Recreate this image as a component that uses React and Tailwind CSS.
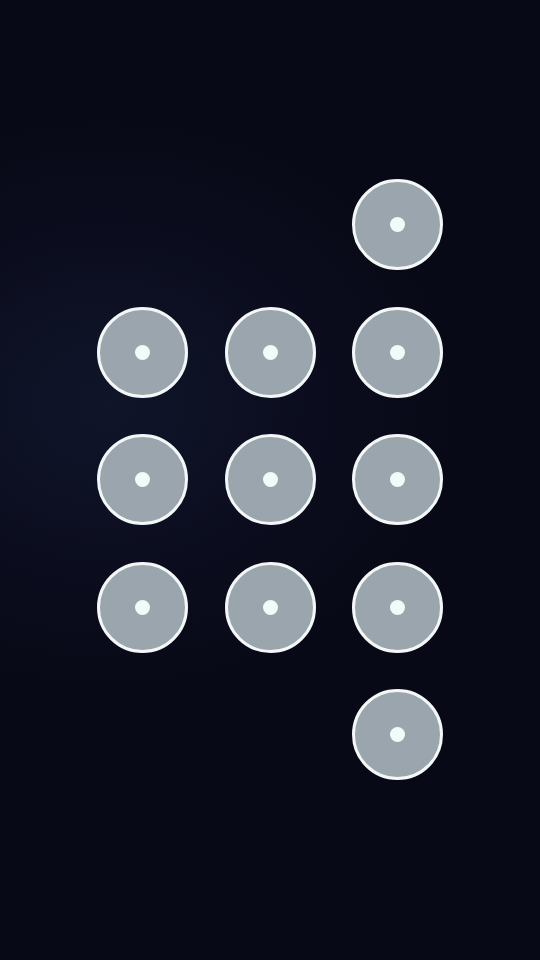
export default function App() {
  // 1 = dot, 0 = empty slot in the 3-column pattern grid
  const cells = [
    0, 0, 1,
    1, 1, 1,
    1, 1, 1,
    1, 1, 1,
    0, 0, 1,
  ]

  return (
    <div className="w-[540px] h-[960px] overflow-hidden bg-[#090a19] bg-[radial-gradient(ellipse_65%_30%_at_20%_42%,#10152a_0%,#0b0d1e_60%,#080916_100%)]">
      <div className="pt-[179px] pl-[97px]">
        <div className="grid grid-cols-[91px_91px_91px] gap-x-[36.5px] gap-y-[36.5px]">
          {cells.map((on, i) =>
            on ? (
              <div
                key={i}
                className="w-[91px] h-[91px] rounded-full bg-[#9aa5ae] border-[3px] border-[#f4f7f8] flex items-center justify-center"
              >
                <div className="w-[15px] h-[15px] rounded-full bg-[#f2fbfa]" />
              </div>
            ) : (
              <div key={i} className="w-[91px] h-[91px]" />
            )
          )}
        </div>
      </div>
    </div>
  )
}
